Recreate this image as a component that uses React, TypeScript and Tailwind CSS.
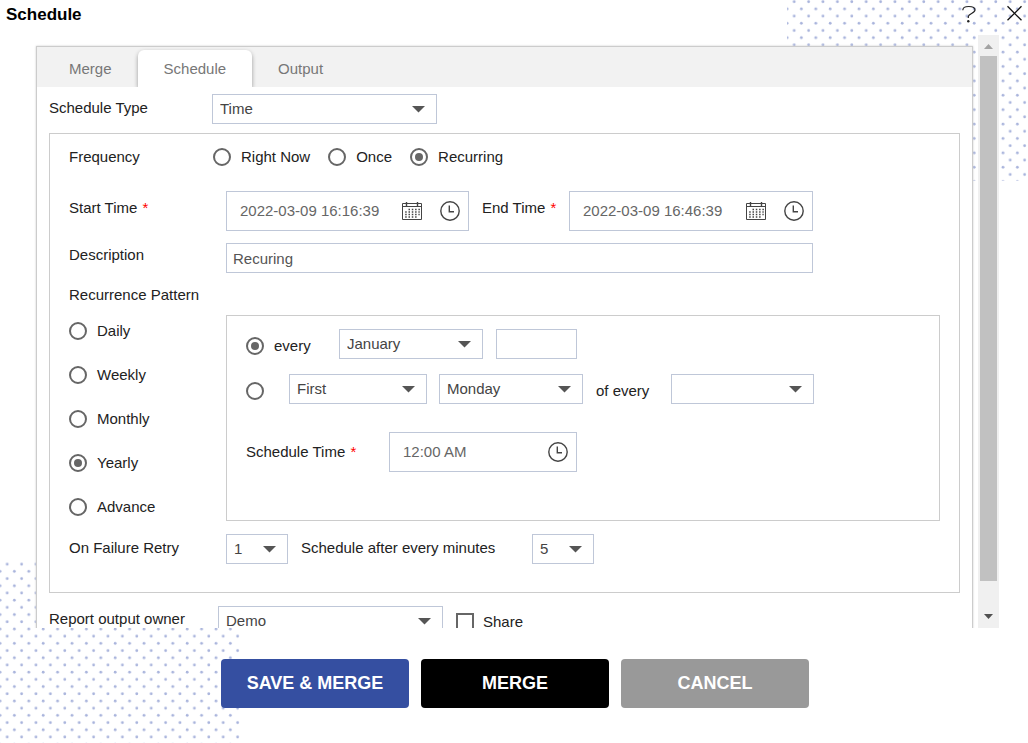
import { useState } from "react";
import type { ReactNode } from "react";

const patterns = ["Daily", "Weekly", "Monthly", "Yearly", "Advance"];
const frequencies = ["Right Now", "Once", "Recurring"];
const tabs = ["Merge", "Schedule", "Output"];

function DotPattern({ id, x, y, className }: { id: string; x: number; y: number; className: string }) {
  return (
    <svg className={`absolute -z-10 w-[241px] h-[181px] ${className}`} aria-hidden="true">
      <defs>
        <pattern id={id} x={x} y={y} width="14.4" height="14.4" patternUnits="userSpaceOnUse">
          <circle cx="3.6" cy="3.6" r="1.4" fill="#a9b4dc" />
          <circle cx="10.8" cy="10.8" r="1.4" fill="#a9b4dc" />
        </pattern>
      </defs>
      <rect width="100%" height="100%" fill={`url(#${id})`} />
    </svg>
  );
}

function CalendarIcon() {
  return (
    <svg className="w-5 h-5" viewBox="0 0 20 20" fill="none" stroke="#444" aria-hidden="true">
      <path d="M0.5 2.5h19v16H0.5z" />
      <path d="M0.5 5.5h19" />
      <path d="M4.5 1v4M15.5 1v4" strokeWidth="1.4" />
      <path d="M6.5 8.5h11.500M3.200 11h14.500M3.200 13.500h14.500M3.200 16h11.500" strokeWidth="1.3" strokeDasharray="1.5 1.8" />
    </svg>
  );
}

function ClockIcon() {
  return (
    <svg className="w-5 h-5" viewBox="0 0 20 20" fill="none" stroke="#444" strokeWidth="1.4" aria-hidden="true">
      <circle cx="10" cy="10" r="9.2" />
      <path d="M9.3 4.5v6.2h4.7" />
    </svg>
  );
}

interface SelectProps {
  id?: string;
  label?: string;
  options: string[];
  className: string;
}

function Select({ id, label, options, className }: SelectProps) {
  return (
    <div className={`relative shrink-0 ${className}`}>
      <select
        id={id}
        aria-label={label}
        className="block w-full h-[30px] appearance-none border border-[#bfc7d8] bg-white pl-[7px] pr-7 text-[#444] outline-none"
      >
        {options.map((option) => (
          <option key={option}>{option}</option>
        ))}
      </select>
      <svg className="absolute right-3 top-3 w-[13px] h-[7px] pointer-events-none" viewBox="0 0 13 7" aria-hidden="true">
        <path d="M0 0h13L6.5 6.5z" fill="#555" />
      </svg>
    </div>
  );
}

interface RadioProps {
  name: string;
  checked: boolean;
  onChange: () => void;
  label?: string;
  children?: ReactNode;
}

function Radio({ name, checked, onChange, label, children }: RadioProps) {
  return (
    <label className="flex items-center gap-2.5 h-5 whitespace-nowrap">
      <input
        type="radio"
        name={name}
        checked={checked}
        onChange={onChange}
        aria-label={label}
        className="size-[18px] shrink-0 appearance-none rounded-full border-2 border-[#666] p-[3px] checked:bg-[#666] bg-clip-content"
      />
      {children}
    </label>
  );
}

function DateField({ id, value, calendar = true, className }: { id: string; value: string; calendar?: boolean; className: string }) {
  return (
    <div className={`flex items-center h-10 shrink-0 border border-[#bfc7d8] bg-white pl-[13px] pr-2 ${className}`}>
      <input id={id} type="text" defaultValue={value} className="flex-1 min-w-0 text-[#666] outline-none" />
      {calendar && (
        <button type="button" aria-label="Pick date" className="mr-[18px]">
          <CalendarIcon />
        </button>
      )}
      <button type="button" aria-label="Pick time">
        <ClockIcon />
      </button>
    </div>
  );
}

function Required() {
  return <span className="ml-px text-[#f00]"> *</span>;
}

export default function App() {
  const [activeTab, setActiveTab] = useState("Schedule");
  const [frequency, setFrequency] = useState("Recurring");
  const [pattern, setPattern] = useState("Yearly");
  const [yearly, setYearly] = useState("date");

  return (
    <div className="relative isolate flex flex-col h-screen overflow-hidden bg-white font-['Liberation_Sans',Arial,sans-serif] text-[15px] leading-5 text-[#222]">
      <DotPattern id="dots-top" x={3.6} y={-1.9} className="top-0 right-0" />
      <DotPattern id="dots-bottom" x={3.6} y={-1.4} className="bottom-0 left-0" />

      <header className="flex justify-between h-[35px] shrink-0 pl-1.5 pr-1.5">
        <h1 className="pt-[5px] text-[17px] font-bold text-black">Schedule</h1>
        <div className="flex items-start gap-[30px] pt-[5px]">
          <button type="button" aria-label="Help">
            <svg className="w-[14px] h-[18px]" viewBox="0 0 14 18" fill="none" stroke="#222" strokeWidth="1.2">
              <path d="M0.8 5.2C0.8 2.2 2.8 1.500 6.800 1.500s6.200 1 6.200 3.500c0 3.200-6.700 3.600-6.700 6.600v1.400" />
              <circle cx="6.300" cy="16.200" r="1.200" fill="#222" stroke="none" />
            </svg>
          </button>
          <button type="button" aria-label="Close">
            <svg className="w-4 h-4" viewBox="0 0 16 16" fill="none" stroke="#111" strokeWidth="1.3">
              <path d="M1.500 1.300l14 14M15.500 1.300l-14 14" />
            </svg>
          </button>
        </div>
      </header>

      <div className="flex flex-1 min-h-0 overflow-hidden pl-9 pr-[29px]">
        <main className="flex-1 min-w-0 h-[640px] mt-[11px] mr-[5px] border border-[#ccc] bg-white shadow-[0_0_2px_#ccc]">
          <div role="tablist" className="flex items-end h-10 overflow-hidden bg-[#f2f2f2] pl-1.5">
            {tabs.map((tab) => (
              <button
                key={tab}
                type="button"
                role="tab"
                aria-selected={activeTab === tab}
                onClick={() => setActiveTab(tab)}
                className={`h-[37px] px-[26px] text-[#777] ${
                  activeTab === tab ? "rounded-t-md bg-white shadow-[0_2px_4px_#999]" : ""
                }`}
              >
                {tab}
              </button>
            ))}
          </div>

          <form className="pt-[7px] px-3 whitespace-nowrap">
            <div className="flex items-start">
              <label htmlFor="type" className="w-[163px] shrink-0 pt-1">Schedule Type</label>
              <Select id="type" options={["Time", "Event"]} className="w-[225px]" />
            </div>

            <section className="mt-[9px] border border-[#ccc] pt-[13px] px-[19px] pb-7">
              <div className="flex" role="radiogroup" aria-labelledby="frequency">
                <span id="frequency" className="w-36 shrink-0">Frequency</span>
                <div className="flex gap-[18px]">
                  {frequencies.map((item) => (
                    <Radio key={item} name="frequency" checked={frequency === item} onChange={() => setFrequency(item)}>
                      {item}
                    </Radio>
                  ))}
                </div>
              </div>

              <div className="flex items-start mt-6">
                <label htmlFor="start" className="w-[157px] shrink-0 pt-[7px]">Start Time<Required /></label>
                <DateField id="start" value="2022-03-09 16:16:39" className="w-[243px]" />
                <label htmlFor="end" className="w-[87px] shrink-0 ml-[13px] pt-[7px]">End Time<Required /></label>
                <DateField id="end" value="2022-03-09 16:46:39" className="w-[244px]" />
              </div>

              <div className="flex items-start mt-3">
                <label htmlFor="description" className="w-[157px] shrink-0 pt-0.5">Description</label>
                <input
                  id="description"
                  type="text"
                  defaultValue="Recuring"
                  className="w-[587px] h-[30px] border border-[#bfc7d8] bg-white px-1.5 text-[#555] outline-none"
                />
              </div>

              <h2 id="pattern" className="mt-3">Recurrence Pattern</h2>

              <div className="flex mt-2.5">
                <div className="flex flex-col gap-6 w-[157px] shrink-0 pt-1.5" role="radiogroup" aria-labelledby="pattern">
                  {patterns.map((item) => (
                    <Radio key={item} name="pattern" checked={pattern === item} onChange={() => setPattern(item)}>
                      {item}
                    </Radio>
                  ))}
                </div>

                <div className="flex-1 min-w-0 border border-[#ccc] pt-[13px] px-[19px] pb-12">
                  <div className="flex items-start">
                    <div className="w-[93px] shrink-0 pt-[7px]">
                      <Radio name="yearly" checked={yearly === "date"} onChange={() => setYearly("date")}>
                        every
                      </Radio>
                    </div>
                    <Select label="Month" options={["January", "February", "March"]} className="w-36" />
                    <input
                      type="text"
                      aria-label="Day of month"
                      className="w-[81px] h-[30px] ml-[13px] border border-[#bfc7d8] bg-white px-1.5 outline-none"
                    />
                  </div>

                  <div className="flex items-start mt-[15px]">
                    <div className="w-[43px] shrink-0 pt-[7px]">
                      <Radio
                        name="yearly"
                        label="By weekday"
                        checked={yearly === "weekday"}
                        onChange={() => setYearly("weekday")}
                      />
                    </div>
                    <Select label="Week" options={["First", "Second", "Third"]} className="w-[138px]" />
                    <Select label="Weekday" options={["Monday", "Tuesday", "Wednesday"]} className="w-36 ml-3" />
                    <label htmlFor="of-every" className="w-[75px] shrink-0 ml-[13px] pt-[7px]">of every</label>
                    <Select id="of-every" options={[""]} className="w-[143px]" />
                  </div>

                  <div className="flex items-center mt-7">
                    <label htmlFor="schedule-time" className="w-[143px] shrink-0">Schedule Time<Required /></label>
                    <DateField id="schedule-time" value="12:00 AM" calendar={false} className="w-[188px]" />
                  </div>
                </div>
              </div>

              <div className="flex items-start mt-[13px]">
                <label htmlFor="retry" className="w-[157px] shrink-0 pt-1">On Failure Retry</label>
                <Select id="retry" options={["1", "2", "3"]} className="w-[62px]" />
                <label htmlFor="minutes" className="w-[231px] shrink-0 ml-[13px] pt-1">Schedule after every minutes</label>
                <Select id="minutes" options={["5", "10", "15"]} className="w-[62px]" />
              </div>
            </section>

            <div className="flex items-start mt-[13px]">
              <label htmlFor="owner" className="w-[169px] shrink-0 pt-[3px]">Report output owner</label>
              <Select id="owner" options={["Demo"]} className="w-[225px]" />
              <label className="flex items-center gap-[9px] ml-[13px] pt-[7px] leading-4">
                <input type="checkbox" className="size-[18px] appearance-none border-2 border-[#666] checked:bg-[#666]" />
                Share
              </label>
            </div>
          </form>
        </main>

        <div className="flex flex-col items-center w-[21px] shrink-0 bg-[#f0f0f0]" aria-hidden="true">
          <svg className="w-[21px] h-[21px] shrink-0" viewBox="0 0 21 21">
            <path d="M6 14h9l-4.500-5z" fill="#a3a3a3" />
          </svg>
          <div className="flex-1 w-[17px] bg-[#c1c1c1]" />
          <svg className="w-[21px] h-[21px] shrink-0 mt-[26px]" viewBox="0 0 21 21">
            <path d="M6 7h9l-4.500 5z" fill="#505050" />
          </svg>
        </div>
      </div>

      <footer className="flex justify-center gap-3 h-[115px] shrink-0 pt-[31px] pl-0.5 text-[18px] font-bold text-white">
        <button type="button" className="w-[188px] h-[49px] rounded bg-[#354fa1] pb-0.5">SAVE &amp; MERGE</button>
        <button type="button" className="w-[188px] h-[49px] rounded bg-black pb-0.5">MERGE</button>
        <button type="button" className="w-[188px] h-[49px] rounded bg-[#999] pb-0.5">CANCEL</button>
      </footer>
    </div>
  );
}
